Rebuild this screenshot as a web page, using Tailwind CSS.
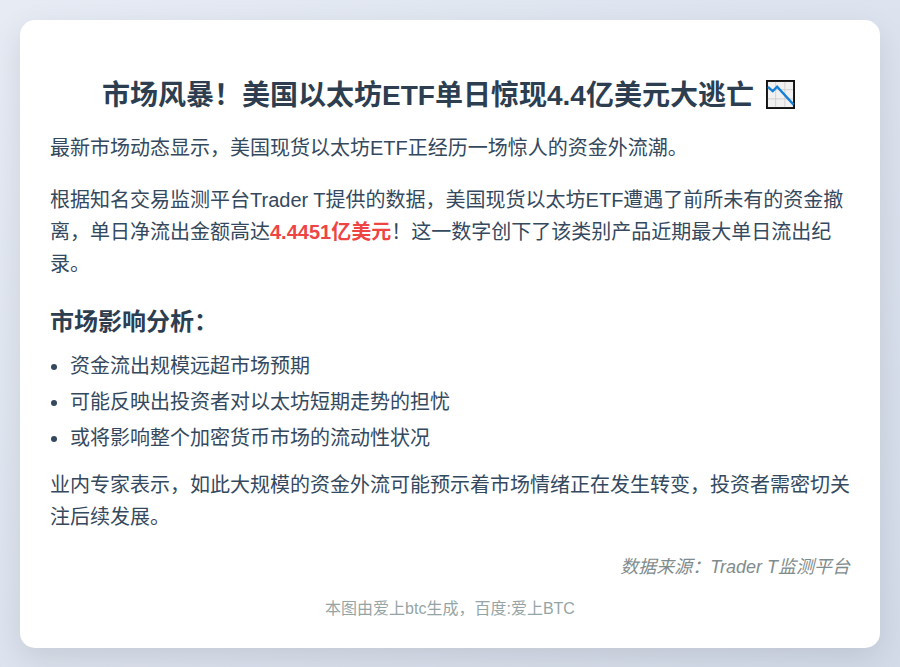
<!DOCTYPE html>
<html lang="zh-CN">
<head>
<meta charset="UTF-8">
<title>市场风暴</title>
<script src="https://cdn.jsdelivr.net/npm/@tailwindcss/browser@4"></script>
</head>
<body class="h-[667px] w-[900px] overflow-hidden bg-gradient-to-br from-[#e6ebf4] to-[#d3dbe9] p-5 font-['Liberation_Sans','Noto_Sans_CJK_SC',sans-serif] text-[#34495e]">
  <div class="h-[628px] rounded-[15px] bg-white px-[30px] pt-[58px] shadow-[0_10px_30px_rgba(0,0,0,0.1)]">
    <h1 class="mb-[20px] flex h-[34px] items-center justify-center gap-[12px] pr-[3px] text-[28px] leading-[34px] font-bold text-[#2c3e50]">
      <span class="mt-[2px]">市场风暴！美国以太坊ETF单日惊现4.4亿美元大逃亡</span>
      <svg class="mb-[2px] h-[29px] w-[29px]" viewBox="0 0 30 30">
        <rect x="1" y="1" width="28" height="28" fill="#f1f1f1" stroke="#111" stroke-width="2"/>
        <path d="M10 2v26M19.500 2v26M2 10h26M2 19.500h26" stroke="#cfcfcf" stroke-width="1"/>
        <path d="M2 7l5 4.500 4.500-4.500 17 18.500" fill="none" stroke="#1580d8" stroke-width="2.400"/>
      </svg>
    </h1>
    <p class="mb-[20px] text-[20px] leading-[32px]">最新市场动态显示，美国现货以太坊ETF正经历一场惊人的资金外流潮。</p>
    <p class="mb-[22px] text-[20px] leading-[32px]">根据知名交易监测平台Trader T提供的数据，美国现货以太坊ETF遭遇了前所未有的资金撤离，单日净流出金额高达<strong class="font-bold text-[#ef4444]">4.4451亿美元</strong>！这一数字创下了该类别产品近期最大单日流出纪录。</p>
    <h2 class="mb-[8px] text-[24px] leading-[40px] font-bold text-[#2c3e50]">市场影响分析：</h2>
    <ul class="mb-[15px] list-disc pl-[20px] text-[20px] leading-[32px] marker:text-[#34495e]">
      <li class="mb-[4px]">资金流出规模远超市场预期</li>
      <li class="mb-[4px]">可能反映出投资者对以太坊短期走势的担忧</li>
      <li>或将影响整个加密货币市场的流动性状况</li>
    </ul>
    <p class="text-[20px] leading-[32px]">业内专家表示，如此大规模的资金外流可能预示着市场情绪正在发生转变，投资者需密切关注后续发展。</p>
    <p class="mt-[18px] text-right text-[18px] leading-[32px] italic text-[#7f8c8d]">数据来源：Trader T监测平台</p>
    <p class="mt-[14px] text-center text-[16px] leading-[24px] text-[#95a5a6]">本图由爱上btc生成，百度:爱上BTC</p>
  </div>
</body>
</html>
